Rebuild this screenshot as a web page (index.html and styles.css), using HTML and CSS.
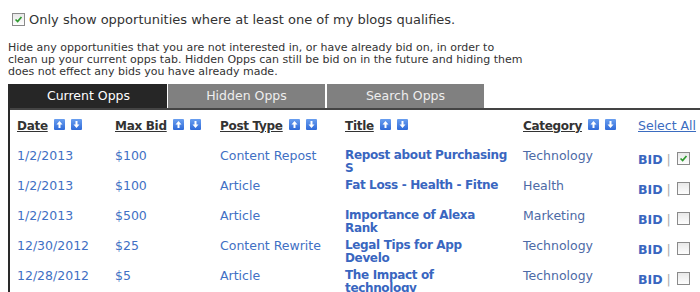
FILE: index.html
```html
<!DOCTYPE html>
<html lang="en">
<head>
<meta charset="UTF-8">
<title>Opportunities</title>
<link rel="stylesheet" href="styles.css">
</head>
<body>
<div class="filter">
  <span class="check checked"><svg viewBox="0 0 13 13"><path d="M3 6.5 L5.5 9 L10 3.5" /></svg></span>
  <span>Only show opportunities where at least one of my blogs qualifies.</span>
</div>

<p class="note">Hide any opportunities that you are not interested in, or have already bid on, in order to
clean up your current opps tab. Hidden Opps can still be bid on in the future and hiding them
does not effect any bids you have already made.</p>

<div class="opps">
  <div class="tabs">
    <div class="tab active">Current Opps</div>
    <div class="tab">Hidden Opps</div>
    <div class="tab">Search Opps</div>
  </div>

  <table class="opp-table">
    <colgroup>
      <col style="width:98px">
      <col style="width:105px">
      <col style="width:125px">
      <col style="width:178px">
      <col style="width:115px">
      <col>
    </colgroup>
    <thead>
      <tr>
        <th><u>Date</u> <span class="sort up"></span> <span class="sort down"></span></th>
        <th><u>Max Bid</u> <span class="sort up"></span> <span class="sort down"></span></th>
        <th><u>Post Type</u> <span class="sort up"></span> <span class="sort down"></span></th>
        <th><u>Title</u> <span class="sort up"></span> <span class="sort down"></span></th>
        <th><u>Category</u> <span class="sort up"></span> <span class="sort down"></span></th>
        <th class="select-all"><a href="#">Select All</a></th>
      </tr>
    </thead>
    <tbody id="rows"></tbody>
  </table>
</div>

<script>
// rows of opportunities
const opps = [
  ['1/2/2013', '$100', 'Content Repost', 'Repost about Purchasing S', 'Technology', true],
  ['1/2/2013', '$100', 'Article', 'Fat Loss - Health - Fitne', 'Health', false],
  ['1/2/2013', '$500', 'Article', 'Importance of Alexa Rank', 'Marketing', false],
  ['12/30/2012', '$25', 'Content Rewrite', 'Legal Tips for App Develo', 'Technology', false],
  ['12/28/2012', '$5', 'Article', 'The Impact of technology', 'Technology', false]
];

const tbody = document.getElementById('rows');
opps.forEach(o => {
  const tr = document.createElement('tr');
  tr.innerHTML = `
    <td>${o[0]}</td>
    <td>${o[1]}</td>
    <td>${o[2]}</td>
    <td class="title">${o[3]}</td>
    <td class="cat">${o[4]}</td>
    <td class="bid"><b>BID</b> <span class="sep">|</span> <span class="check${o[5] ? ' checked' : ''}"><svg viewBox="0 0 13 13"><path d="M3 6.5 L5.5 9 L10 3.5" /></svg></span></td>
  `;
  tbody.appendChild(tr);
});

// arrows for the sort buttons
document.querySelectorAll('.sort').forEach(s => {
  const up = s.classList.contains('up');
  s.innerHTML = up
    ? '<svg viewBox="0 0 11 11"><path d="M5.5 2 L2.5 5.5 H4.5 V9 H6.5 V5.5 H8.5 Z" /></svg>'
    : '<svg viewBox="0 0 11 11"><path d="M5.5 9 L2.5 5.5 H4.5 V2 H6.5 V5.5 H8.5 Z" /></svg>';
});
</script>
</body>
</html>
```

FILE: styles.css
```css
/* General styles */
body {
  font-family: "DejaVu Sans", Verdana, sans-serif;
  margin: 0;
  padding: 0;
  background-color: #fff;
  color: #333;
  width: 720px;
}

.filter {
  display: flex;
  align-items: center;
  gap: 4px;
  padding: 12px 0 0 12px;
  font-size: 13px;
  color: #333;
}

.check {
  display: inline-block;
  width: 11px;
  height: 11px;
  border: 1px solid #8a8a8a;
  background: linear-gradient(#e8e8e8, #fdfdfd);
  vertical-align: middle;
}

.check svg {
  display: none;
  width: 11px;
  height: 11px;
}

.check.checked svg {
  display: block;
}

.check path {
  fill: none;
  stroke: #2f9a2f;
  stroke-width: 2;
}

.note {
  margin: 15px 0 0 8px;
  font-size: 11px;
  line-height: 12px;
  color: #333;
  white-space: pre-line;
}

/* Tabs */
.opps {
  margin: 6px 0 0 8px;
  border-left: 2px solid #2a2a2a;
}

.tabs {
  display: flex;
  gap: 1px;
  border-bottom: 2px solid #444;
}

.tab {
  width: 157px;
  height: 24px;
  line-height: 24px;
  text-align: center;
  font-size: 12.5px;
  color: #eee;
  background-color: #808080;
}

.tab + .tab + .tab {
  margin-left: 1px;
}

.tab.active {
  background-color: #262626;
  color: #fff;
}

/* Table */
.opp-table {
  border-collapse: collapse;
  table-layout: fixed;
  width: 700px;
}

.opp-table th {
  text-align: left;
  font-size: 12px;
  letter-spacing: -0.3px;
  font-weight: bold;
  color: #333;
  padding: 8px 0 16px 7px;
  white-space: nowrap;
}

.sort {
  display: inline-block;
  width: 11px;
  height: 11px;
  vertical-align: 0;
  margin-left: 2px;
}

.sort svg {
  display: block;
  width: 11px;
  height: 11px;
  background: linear-gradient(#6a9ff0, #2f6ad8);
  border-radius: 1px;
}

.sort path {
  fill: #fff;
}

.select-all a {
  font-weight: normal;
  font-size: 12.5px;
  letter-spacing: 0;
  color: #3b6cc0;
  text-decoration: underline;
}

.opp-table tbody tr {
  height: 30px;
}

.opp-table td {
  vertical-align: top;
  font-size: 12.5px;
  line-height: 13px;
  color: #3f70c4;
  padding: 0 0 0 7px;
}

.opp-table td.title {
  font-weight: bold;
  font-size: 12px;
  letter-spacing: -0.35px;
  color: #3966c0;
  padding-right: 8px;
}

.opp-table td.cat {
  color: #4d6aa6;
}

.opp-table td.bid {
  padding-top: 3px;
  white-space: nowrap;
}

.bid b {
  color: #3966c0;
}

.sep {
  color: #aaa;
}

.bid .check {
  margin-left: 2px;
  vertical-align: -1px;
}
```
